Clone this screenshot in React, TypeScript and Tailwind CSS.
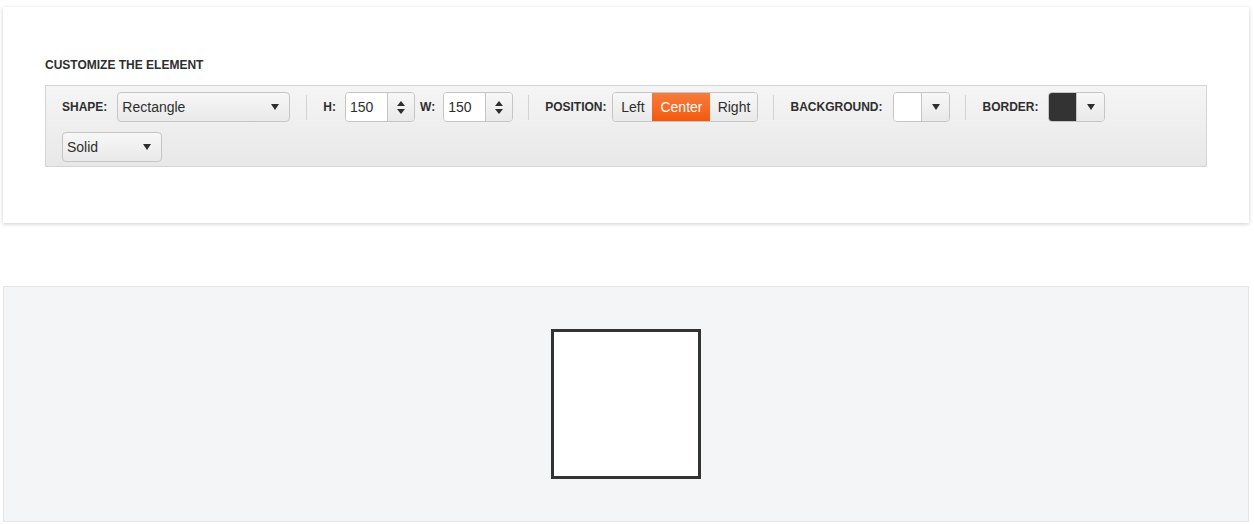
import React from "react";

function Caret({ className = "" }: { className?: string }) {
  return (
    <svg width="8" height="6" viewBox="0 0 8 6" className={className}>
      <path d="M0 0 H8 L4 6 Z" fill="#2e2e2e" />
    </svg>
  );
}

function Spin() {
  return (
    <svg width="8" height="13" viewBox="0 0 8 13">
      <path d="M4 0 L8 5 H0 Z" fill="#2e2e2e" />
      <path d="M0 8 H8 L4 13 Z" fill="#2e2e2e" />
    </svg>
  );
}

function Label({ children, className = "" }: { children: React.ReactNode; className?: string }) {
  return (
    <span className={"text-[12px] font-bold text-[#2e2e2e] leading-none " + className}>{children}</span>
  );
}

function Sep({ className = "" }: { className?: string }) {
  return <div className={"w-px h-[25px] bg-[#d3d3d3] " + className} />;
}

function Dropdown({ value, width }: { value: string; width: string }) {
  return (
    <div
      className={
        "h-[30px] flex items-center justify-between rounded-[4px] border border-[#c5c5c5] bg-gradient-to-b from-[#f7f7f7] to-[#e9e9e9] pl-[4px] pr-[10px] text-[14px] text-[#2e2e2e] " +
        width
      }
    >
      <span>{value}</span>
      <Caret />
    </div>
  );
}

function Numeric({ value }: { value: string }) {
  return (
    <div className="h-[30px] w-[70px] flex rounded-[4px] border border-[#c5c5c5] overflow-hidden">
      <div className="w-[41px] bg-white flex items-center pl-[4px] text-[14px] text-[#2e2e2e]">{value}</div>
      <div className="flex-1 border-l border-[#c5c5c5] bg-gradient-to-b from-[#f7f7f7] to-[#e9e9e9] flex items-center justify-center">
        <Spin />
      </div>
    </div>
  );
}

function ColorPicker({ color }: { color: string }) {
  return (
    <div className="h-[30px] w-[57px] flex rounded-[4px] border border-[#c5c5c5] overflow-hidden">
      <div className={"w-[27px] " + color} />
      <div className="flex-1 border-l border-[#c5c5c5] bg-gradient-to-b from-[#f7f7f7] to-[#e9e9e9] flex items-center justify-center">
        <Caret />
      </div>
    </div>
  );
}

export default function App() {
  return (
    <div className="w-[1254px] h-[525px] bg-white font-['Liberation_Sans',Arial,sans-serif] pt-[7px]">
      <div className="ml-[3px] w-[1246px] h-[216px] bg-white shadow-[0_1px_4px_rgba(0,0,0,0.2)] pt-[51px] px-[42px]">
        <div className="text-[12px] leading-[14px] font-bold text-[#2e2e2e]">CUSTOMIZE THE ELEMENT</div>
        <div className="mt-[13px] h-[82px] border border-[#d5d5d5] bg-gradient-to-b from-[#f5f5f5] to-[#e8e8e8] pt-[6px] pl-[16px] pr-[16px] flex flex-wrap items-center content-start gap-y-[10px]">
          <div className="flex items-center">
            <Label>SHAPE:</Label>
            <div className="ml-[10px]">
              <Dropdown value="Rectangle" width="w-[173px]" />
            </div>
          </div>
          <Sep className="mx-[16px]" />
          <div className="flex items-center">
            <Label>H:</Label>
            <div className="ml-[9px]">
              <Numeric value="150" />
            </div>
            <Label className="ml-[5px]">W:</Label>
            <div className="ml-[8px]">
              <Numeric value="150" />
            </div>
          </div>
          <Sep className="ml-[15px] mr-[16px]" />
          <div className="flex items-center">
            <Label>POSITION:</Label>
            <div className="ml-[6px] h-[30px] flex rounded-[4px] border border-[#c5c5c5] overflow-hidden text-[14px]">
              <div className="w-[39px] flex items-center justify-center bg-gradient-to-b from-[#f7f7f7] to-[#e9e9e9] text-[#2e2e2e]">
                Left
              </div>
              <div className="w-[58px] -my-px flex items-center justify-center bg-gradient-to-b from-[#f67d3c] to-[#f35800] text-white">
                Center
              </div>
              <div className="w-[47px] flex items-center justify-center bg-gradient-to-b from-[#f7f7f7] to-[#e9e9e9] text-[#2e2e2e]">
                Right
              </div>
            </div>
          </div>
          <Sep className="ml-[15px] mr-[16px]" />
          <div className="flex items-center">
            <Label>BACKGROUND:</Label>
            <div className="ml-[11px]">
              <ColorPicker color="bg-white" />
            </div>
          </div>
          <Sep className="ml-[15px] mr-[16px]" />
          <div className="flex items-center mr-[16px]">
            <Label>BORDER:</Label>
            <div className="ml-[10px]">
              <ColorPicker color="bg-[#333333]" />
            </div>
          </div>
          <Dropdown value="Solid" width="w-[100px]" />
        </div>
      </div>
      <div className="ml-[3px] mt-[63px] w-[1246px] h-[236px] border border-[#e4e6e9] bg-[#f4f5f7] flex justify-center pt-[42px]">
        <div className="w-[150px] h-[150px] border-[3px] border-[#333333] bg-white" />
      </div>
    </div>
  );
}
